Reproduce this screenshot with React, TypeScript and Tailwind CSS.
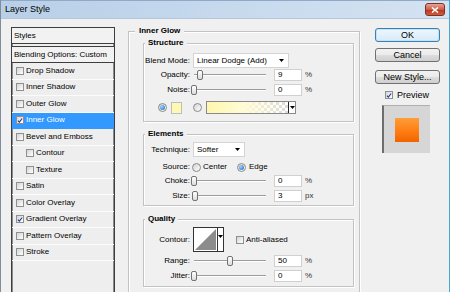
import type { ReactNode } from "react";

type StyleItem = {
	label: string;
	checked?: boolean;
	active?: boolean;
	indent?: boolean;
};

const styleItems: StyleItem[] = [
	{ label: "Drop Shadow" },
	{ label: "Inner Shadow" },
	{ label: "Outer Glow" },
	{ label: "Inner Glow", checked: true, active: true },
	{ label: "Bevel and Emboss" },
	{ label: "Contour", indent: true },
	{ label: "Texture", indent: true },
	{ label: "Satin" },
	{ label: "Color Overlay" },
	{ label: "Gradient Overlay", checked: true },
	{ label: "Pattern Overlay" },
	{ label: "Stroke" },
];

const Check = ({ checked }: { checked?: boolean }) => (
	<span className="flex h-[8px] w-[8px] shrink-0 items-center justify-center border border-[#8e8f8f] bg-[linear-gradient(135deg,#d4d4d4,#ffffff)]">
		{checked && (
			<svg viewBox="0 0 8 8" className="h-[7px] w-[7px]">
				<path
					d="M1.2 4.1 L3.1 6.2 L6.9 1.3"
					fill="none"
					stroke="#1d3a9a"
					strokeWidth="1.4"
				/>
			</svg>
		)}
	</span>
);

const Radio = ({ on }: { on?: boolean }) => (
	<span className="flex h-[9px] w-[9px] shrink-0 items-center justify-center rounded-full border border-[#8a8a8a] bg-[linear-gradient(135deg,#d2d2d2,#ffffff)]">
		{on && (
			<span className="h-[5px] w-[5px] rounded-full bg-[radial-gradient(circle_at_35%_35%,#9ad8ff,#1c5fb8)]" />
		)}
	</span>
);

const Arrow = () => (
	<svg viewBox="0 0 5 3" className="h-[3px] w-[5px]">
		<path d="M0 0 H5 L2.5 3 Z" fill="#000" />
	</svg>
);

const Dropdown = ({ text, width }: { text: string; width: string }) => (
	<div
		className={`ml-[3px] flex h-[15px] items-center justify-between border border-[#d4d4d4] bg-white pl-[3px] pr-[4px] ${width}`}
	>
		<span>{text}</span>
		<Arrow />
	</div>
);

const Slider = ({ pos }: { pos: number }) => (
	<div className="relative ml-[4px] h-[12px] w-[72px] shrink-0">
		<div className="absolute left-0 right-0 top-[5px] h-[2px] border-b border-t border-b-white border-t-[#9c9c9c]" />
		<div
			className="absolute top-[1px] h-[10px] w-[6px] rounded-[2px] border border-[#727272] bg-[linear-gradient(#ffffff,#dcdcdc)]"
			style={{ left: `${pos * 0.72 - 3}px` }}
		/>
	</div>
);

const Label = ({ children }: { children: ReactNode }) => (
	<span className="w-[46px] shrink-0 text-right">{children}</span>
);

const ValueRow = ({
	label,
	value,
	pos,
	unit,
	className,
}: {
	label: string;
	value: string;
	pos: number;
	unit: string;
	className: string;
}) => (
	<div className={`flex h-[12px] items-center ${className}`}>
		<Label>{label}</Label>
		<Slider pos={pos} />
		<div className="ml-[8px] flex h-[12px] w-[28px] shrink-0 items-center border border-[#d0d0d0] bg-white pl-[3px]">
			{value}
		</div>
		<span className="ml-[3px] text-[#333]">{unit}</span>
	</div>
);

const Group = ({
	title,
	className,
	legendClass,
	children,
}: {
	title: string;
	className: string;
	legendClass: string;
	children: ReactNode;
}) => (
	<fieldset
		className={`border border-[#c3c3c3] shadow-[inset_1px_1px_0_#ffffff,1px_1px_0_#ffffff] ${className}`}
	>
		<legend
			className={`bg-[#f0f0f0] font-bold leading-[10px] ${legendClass}`}
		>
			{title}
		</legend>
		{children}
	</fieldset>
);

const Button = ({ text, primary }: { text: string; primary?: boolean }) => (
	<div
		className={`flex h-[14px] items-center justify-center rounded-[3px] border text-[9px] ${
			primary
				? "border-[#3c7fb1] bg-[linear-gradient(#eef7fd,#d6ebf9)] shadow-[inset_0_0_0_1px_#bfe4fa]"
				: "border-[#707070] bg-[linear-gradient(#f2f2f2_0%,#ebebeb_50%,#dddddd_51%,#cfcfcf_100%)]"
		}`}
	>
		{text}
	</div>
);

export default function App() {
	return (
		<div className="flex h-[292px] w-[450px] flex-col overflow-hidden border-l border-r border-l-[#7f8d9c] border-r-[#45a9d3] bg-[#f0f0f0] font-['Liberation_Sans',Arial,sans-serif] text-[8px] leading-none text-black">
			{/* title bar */}
			<div className="flex h-[19px] shrink-0 items-center justify-between border-b border-t border-b-[#b4c6da] border-t-[#8fa9c6] bg-[linear-gradient(to_right,#b8cfe8,#c9dbee_60%,#d4e3f2)] pl-[4px] pr-[4px]">
				<span className="text-[9px]">Layer Style</span>
				<div className="flex h-[13px] w-[20px] items-center justify-center rounded-[3px] border border-[#7a3326] bg-[linear-gradient(#e8a497,#cf5a44_50%,#b8341c_51%,#cf5d3d)]">
					<svg viewBox="0 0 8 6" className="h-[6px] w-[8px]">
						<path
							d="M1 0.5 L7 5.5 M7 0.5 L1 5.5"
							stroke="#fff"
							strokeWidth="1.6"
						/>
					</svg>
				</div>
			</div>

			<div className="flex flex-1 items-start">
				{/* styles list */}
				<div className="ml-[10px] mt-[8px] flex h-[280px] w-[104px] shrink-0 flex-col border border-[#3e3e3e] bg-[#eeeeee] shadow-[inset_1px_0_0_#8a8a8a,inset_-1px_0_0_#8a8a8a]">
					<div className="flex h-[16px] items-center border-b border-[#3e3e3e] bg-[#f2f2f2] pl-[2px]">
						Styles
					</div>
					<div className="mt-[2px] flex h-[17px] items-center border-b border-t border-[#3e3e3e] bg-[#f2f2f2] pl-[2px]">
						Blending Options: Custom
					</div>
					{styleItems.map((item) => (
						<div
							key={item.label}
							className={`flex h-[16.5px] shrink-0 items-center border-b ${
								item.active
									? "border-[#3399ff] bg-[#3399ff] text-white"
									: "border-[#fbfbfb]"
							} ${item.indent ? "pl-[14px]" : "pl-[4px]"}`}
						>
							<Check checked={item.checked} />
							<span className="ml-[2px]">{item.label}</span>
						</div>
					))}
				</div>

				{/* inner glow settings */}
				<Group
					title="Inner Glow"
					className="ml-[13px] mt-[7px] h-[300px] w-[232px] shrink-0"
					legendClass="ml-[6px] px-[4px]"
				>
					<div className="pl-[14px] pr-[5px] pt-[2px]">
						<Group
							title="Structure"
							className="w-[211px]"
							legendClass="ml-[1px] px-[3px]"
						>
							<div className="pb-[7px]">
								<div className="mt-[5px] flex h-[15px] items-center">
									<Label>Blend Mode:</Label>
									<Dropdown text="Linear Dodge (Add)" width="w-[96px]" />
								</div>
								<ValueRow
									label="Opacity:"
									value="9"
									pos={9}
									unit="%"
									className="mt-[1px]"
								/>
								<ValueRow
									label="Noise:"
									value="0"
									pos={0}
									unit="%"
									className="mt-[3px]"
								/>
								<div className="mt-[5px] flex h-[13px] items-center pl-[14px]">
									<Radio on />
									<div className="ml-[4px] h-[12px] w-[11px] border border-[#bdbdbd] bg-[#fff8b4]" />
									<span className="ml-[11px]">
										<Radio />
									</span>
									<div className="ml-[4px] flex h-[13px] w-[90px] border border-[#8a8a8a]">
										<div className="flex-1 bg-[linear-gradient(to_right,#fff7ae,#fffbd6_45%,rgba(255,255,255,0)),repeating-conic-gradient(#d9d9d9_0_25%,#ffffff_0_50%)] bg-[length:100%_100%,6px_6px]" />
										<div className="flex w-[7px] items-center justify-center border-l border-[#222] bg-white">
											<Arrow />
										</div>
									</div>
								</div>
							</div>
						</Group>

						<Group
							title="Elements"
							className="mt-[7px] w-[211px]"
							legendClass="ml-[1px] px-[3px]"
						>
							<div className="pb-[3px]">
								<div className="mt-[3px] flex h-[15px] items-center">
									<Label>Technique:</Label>
									<Dropdown text="Softer" width="w-[52px]" />
								</div>
								<div className="mt-[4px] flex h-[12px] items-center">
									<Label>Source:</Label>
									<span className="ml-[2px]">
										<Radio />
									</span>
									<span className="ml-[2px] w-[34px]">Center</span>
									<Radio on />
									<span className="ml-[3px]">Edge</span>
								</div>
								<ValueRow
									label="Choke:"
									value="0"
									pos={0}
									unit="%"
									className="mt-[2px]"
								/>
								<ValueRow
									label="Size:"
									value="3"
									pos={1}
									unit="px"
									className="mt-[3px]"
								/>
							</div>
						</Group>

						<Group
							title="Quality"
							className="mt-[8px] w-[211px]"
							legendClass="ml-[1px] px-[3px]"
						>
							<div className="pb-[4px]">
								<div className="mt-[3px] flex h-[25px] items-center">
									<Label>Contour:</Label>
									<div className="ml-[3px] flex h-[25px] w-[31px] border border-[#333] bg-white">
										<svg viewBox="0 0 23 23" className="h-[23px] w-[23px]">
											<path d="M1 22 L22 1 V22 Z" fill="#8c8c8c" />
										</svg>
										<div className="flex flex-1 items-start justify-center border-l border-[#333] pt-[7px]">
											<Arrow />
										</div>
									</div>
									<span className="ml-[12px]">
										<Check />
									</span>
									<span className="ml-[2px]">Anti-aliased</span>
								</div>
								<ValueRow
									label="Range:"
									value="50"
									pos={50}
									unit="%"
									className="mt-[3px]"
								/>
								<ValueRow
									label="Jitter:"
									value="0"
									pos={0}
									unit="%"
									className="mt-[3px]"
								/>
							</div>
						</Group>
					</div>
				</Group>

				{/* buttons and preview */}
				<div className="ml-[15px] mt-[9px] flex w-[65px] shrink-0 flex-col">
					<Button text="OK" primary />
					<div className="mt-[6px]">
						<Button text="Cancel" />
					</div>
					<div className="mt-[8px]">
						<Button text="New Style..." />
					</div>
					<div className="mt-[5px] flex h-[12px] items-center pl-[10px] text-[9px]">
						<Check checked />
						<span className="ml-[4px]">Preview</span>
					</div>
					<div className="ml-[7px] mt-[4px] flex h-[48px] w-[48px] items-center justify-center border-l-2 border-t border-l-[#6e6e6e] border-t-[#b0b0b0] bg-[#d6d6d6]">
						<div className="h-[24px] w-[24px] bg-[linear-gradient(#ff9d3a,#ff7a10_60%,#f06400)]" />
					</div>
				</div>
			</div>
		</div>
	);
}
